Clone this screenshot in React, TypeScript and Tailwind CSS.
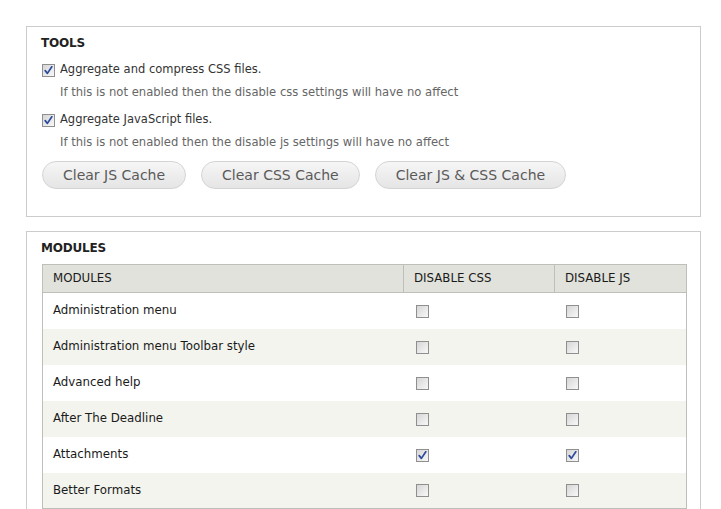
import React from "react";

const modules: Array<{ name: string; css: boolean; js: boolean }> = [
  { name: "Administration menu", css: false, js: false },
  { name: "Administration menu Toolbar style", css: false, js: false },
  { name: "Advanced help", css: false, js: false },
  { name: "After The Deadline", css: false, js: false },
  { name: "Attachments", css: true, js: true },
  { name: "Better Formats", css: false, js: false },
];

function Checkbox({ checked }: { checked: boolean }) {
  return (
    <span className="inline-flex h-[13px] w-[13px] shrink-0 items-center justify-center border border-[#8f8f8f] bg-gradient-to-br from-[#d6d6d6] to-[#f8f8f8]">
      {checked && (
        <svg width="9" height="9" viewBox="0 0 9 9">
          <path
            d="M1.2 4.6 L3.4 7.4 L7.8 0.8"
            fill="none"
            stroke="#2b4a9c"
            strokeWidth="1.7"
            strokeLinecap="round"
            strokeLinejoin="round"
          />
        </svg>
      )}
    </span>
  );
}

function Button({ children }: { children: React.ReactNode }) {
  return (
    <button className="h-[28px] rounded-full border border-[#d4d4d4] bg-gradient-to-b from-[#f6f6f6] to-[#e5e5e5] px-[20px] text-[14px] leading-[26px] text-[#5a5a5a]">
      {children}
    </button>
  );
}

export default function App() {
  return (
    <div
      className="min-h-[509px] bg-white pl-[26px] pr-[20px] pt-[26px] text-[#333]"
      style={{ fontFamily: '"DejaVu Sans", Verdana, sans-serif' }}
    >
      <div className="border border-[#cccccc] pb-[27px] pl-[15px] pr-[13px] pt-[8px]">
        <h2 className="ml-[-1px] text-[12px] font-bold leading-[16px] tracking-[-0.2px] text-[#222]">
          TOOLS
        </h2>
        <label className="mt-[10px] flex h-[18px] items-center gap-[5px] text-[11.5px] text-[#333]">
          <Checkbox checked />
          Aggregate and compress CSS files.
        </label>
        <p className="mt-[5px] pl-[18px] text-[11.6px] leading-[16px] text-[#666]">
          If this is not enabled then the disable css settings will have no affect
        </p>
        <label className="mt-[11px] flex h-[18px] items-center gap-[5px] text-[11.5px] text-[#333]">
          <Checkbox checked />
          Aggregate JavaScript files.
        </label>
        <p className="mt-[5px] pl-[18px] text-[11.6px] leading-[16px] text-[#666]">
          If this is not enabled then the disable js settings will have no affect
        </p>
        <div className="mt-[11px] flex gap-[15px]">
          <Button>Clear JS Cache</Button>
          <Button>Clear CSS Cache</Button>
          <Button>Clear JS &amp; CSS Cache</Button>
        </div>
      </div>

      <div className="mt-[14px] border border-[#cccccc] pl-[15px] pr-[13px] pt-[8px]">
        <h2 className="ml-[-1px] text-[12px] font-bold leading-[16px] tracking-[-0.2px] text-[#222]">
          MODULES
        </h2>
        <table className="mt-[8px] w-full border-collapse border border-[#bebfb9] text-[11.8px]">
          <thead>
            <tr className="h-[28px] bg-[#e1e2dc] text-left">
              <th className="w-[361px] border border-[#bebfb9] pl-[10px] font-normal text-[#1a1a1a]">
                MODULES
              </th>
              <th className="w-[151px] border border-[#bebfb9] pl-[10px] font-normal text-[#1a1a1a]">
                DISABLE CSS
              </th>
              <th className="border border-[#bebfb9] pl-[10px] font-normal text-[#1a1a1a]">
                DISABLE JS
              </th>
            </tr>
          </thead>
          <tbody>
            {modules.map((m, i) => (
              <tr
                key={m.name}
                className={i % 2 === 1 ? "h-[36px] bg-[#f3f4ee]" : "h-[36px] bg-white"}
              >
                <td className="pl-[10px] pt-[1px] text-[#1a1a1a]">{m.name}</td>
                <td className="pl-[12px] pt-[1px]">
                  <div className="flex">
                    <Checkbox checked={m.css} />
                  </div>
                </td>
                <td className="pl-[11px] pt-[1px]">
                  <div className="flex">
                    <Checkbox checked={m.js} />
                  </div>
                </td>
              </tr>
            ))}
          </tbody>
        </table>
      </div>
    </div>
  );
}
